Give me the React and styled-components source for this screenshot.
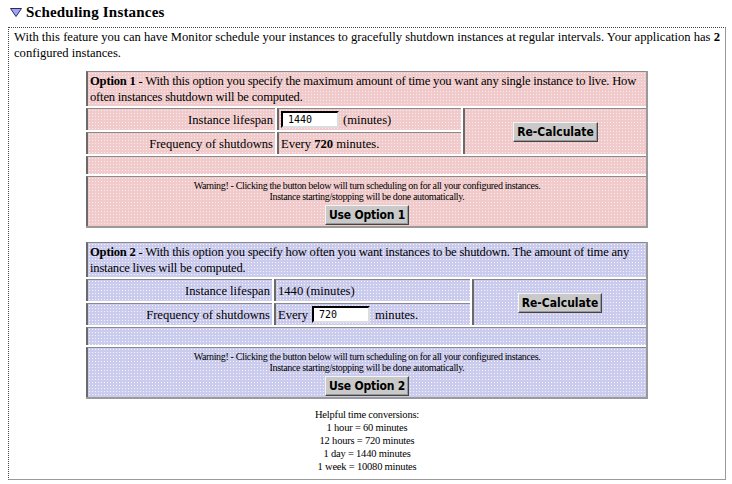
import styled, { createGlobalStyle } from "styled-components";

const GlobalStyle = createGlobalStyle`
  html, body {
    margin: 0;
    padding: 0;
    background: #ffffff;
  }
  body {
    font-family: "Liberation Serif", "Times New Roman", serif;
    font-size: 12.6px;
    color: #000;
  }
`;

const tints = {
  pink: { base: "#f1cbcb", dot: "#fbeaea" },
  blue: { base: "#cbcbee", dot: "#f4f4ff" },
};

const Page = styled.div`
  width: 732px;
  height: 484px;
  padding: 2px 6px 0 8px;
  box-sizing: border-box;
`;

const Title = styled.h2`
  display: flex;
  align-items: center;
  gap: 4px;
  margin: 0 0 4px 2px;
  height: 21px;
  font-size: 15px;
  font-weight: bold;
  letter-spacing: 0.2px;
`;

const Box = styled.div`
  width: 718px;
  height: 453px;
  box-sizing: border-box;
  border-top: 1px dotted #444;
  border-left: 1px dotted #444;
  border-right: 1px solid #999;
  border-bottom: 1px solid #999;
  padding: 1px 5px 0 5px;
  display: flex;
  flex-direction: column;
  align-items: center;
`;

const Intro = styled.p`
  align-self: stretch;
  margin: 0 0 10px 0;
  line-height: 16px;
`;

const Panel = styled.div`
  width: 562px;
  box-sizing: border-box;
  display: grid;
  grid-template-columns: ${(p) => p.$cols};
  grid-template-rows: 35px 22px 22px 18px 50px;
  gap: 2px;
  border-right: 2px solid #9a9a9a;
  border-bottom: 2px solid #9a9a9a;
  margin-bottom: ${(p) => p.$after}px;
  background: #fff;
`;

const Cell = styled.div`
  box-sizing: border-box;
  border-top: 1px solid #8a8a8a;
  border-left: 2px solid #6a6a6a;
  background-color: ${(p) => tints[p.$tint].base};
  background-image: radial-gradient(
    ${(p) => tints[p.$tint].dot} 0.6px,
    transparent 0.9px
  );
  background-size: 3px 3px;
  padding: 1px 2px;
  display: flex;
  align-items: center;
  justify-content: ${(p) => p.$justify || "flex-start"};
  grid-column: ${(p) => p.$col || "auto"};
  grid-row: ${(p) => p.$row || "auto"};
  line-height: 16px;
  white-space: nowrap;
`;

const HeaderCell = styled(Cell)`
  display: block;
  white-space: normal;
  padding: 1px 2px 0 2px;
  letter-spacing: -0.2px;
`;

const WarnCell = styled(Cell)`
  flex-direction: column;
  justify-content: flex-start;
  padding-top: 3px;
  font-size: 10px;
  line-height: 11px;
  letter-spacing: -0.35px;
`;

const Btn = styled.button`
  font-family: "DejaVu Sans Condensed", "DejaVu Sans", "Liberation Sans", sans-serif;
  font-stretch: condensed;
  font-weight: bold;
  font-size: 12px;
  letter-spacing: ${(p) => p.$track || 0}px;
  color: #000;
  background: #c9c9c9;
  border: 1px solid;
  border-color: #f4f4f4 #444 #444 #f4f4f4;
  box-shadow: inset -1px -1px 0 #999;
  padding: 1px 3px;
  height: 20px;
  line-height: 14px;
  margin-top: ${(p) => p.$top || 0}px;
`;

const Field = styled.input`
  box-sizing: border-box;
  width: 58px;
  height: 17px;
  border: 2px inset #888;
  border-top-color: #333;
  border-left-color: #333;
  border-right-color: #ddd;
  border-bottom-color: #ddd;
  background: #fff;
  padding: 0 5px;
  font-family: "DejaVu Sans Mono", "Liberation Mono", monospace;
  font-size: 10px;
  margin: 0 ${(p) => p.$right || 4}px 0 ${(p) => p.$left || 0}px;
`;

const Conversions = styled.div`
  margin-top: 9px;
  text-align: center;
  font-size: 10.5px;
  line-height: 13px;
  letter-spacing: -0.2px;
`;

const Triangle = () => (
  <svg width="12" height="9" viewBox="0 0 12 9">
    <polygon points="0.5,0.5 11.5,0.5 6,8.5" fill="#9fa4f0" stroke="#2a2a6a" strokeWidth="1" />
  </svg>
);

const OptionPanel = ({ tint, cols, after, number, desc, lifespan, frequency }) => (
  <Panel $cols={cols} $after={after}>
    <HeaderCell $tint={tint} $col="1 / 4" $row="1">
      <b>Option {number}</b> - {desc}
    </HeaderCell>
    <Cell $tint={tint} $col="1" $row="2" $justify="flex-end">Instance lifespan</Cell>
    <Cell $tint={tint} $col="2" $row="2">{lifespan}</Cell>
    <Cell $tint={tint} $col="3" $row="2 / 4" $justify="center">
      <Btn>Re-Calculate</Btn>
    </Cell>
    <Cell $tint={tint} $col="1" $row="3" $justify="flex-end">Frequency of shutdowns</Cell>
    <Cell $tint={tint} $col="2" $row="3">{frequency}</Cell>
    <Cell $tint={tint} $col="1 / 4" $row="4" />
    <WarnCell $tint={tint} $col="1 / 4" $row="5">
      <div>Warning! - Clicking the button below will turn scheduling on for all your configured instances.</div>
      <div>Instance starting/stopping will be done automatically.</div>
      <Btn $top={3} $track={-0.2}>Use Option {number}</Btn>
    </WarnCell>
  </Panel>
);

export default function App() {
  return (
    <>
      <GlobalStyle />
      <Page>
        <Title>
          <Triangle />
          Scheduling Instances
        </Title>
        <Box>
          <Intro>
            With this feature you can have Monitor schedule your instances to gracefully shutdown
            instances at regular intervals. Your application has <b>2</b> configured instances.
          </Intro>
          <OptionPanel
            tint="pink"
            cols="189px 184px 1fr"
            after={14}
            number={1}
            desc="With this option you specify the maximum amount of time you want any single instance to live. How often instances shutdown will be computed."
            lifespan={
              <>
                <Field defaultValue="1440" />
                (minutes)
              </>
            }
            frequency={
              <>
                Every&nbsp;<b>720</b>&nbsp;minutes.
              </>
            }
          />
          <OptionPanel
            tint="blue"
            cols="186px 196px 1fr"
            after={0}
            number={2}
            desc="With this option you specify how often you want instances to be shutdown. The amount of time any instance lives will be computed."
            lifespan="1440 (minutes)"
            frequency={
              <>
                Every
                <Field defaultValue="720" $left={4} $right={5} />
                minutes.
              </>
            }
          />
          <Conversions>
            Helpful time conversions:
            <br />1 hour = 60 minutes
            <br />12 hours = 720 minutes
            <br />1 day = 1440 minutes
            <br />1 week = 10080 minutes
          </Conversions>
        </Box>
      </Page>
    </>
  );
}
